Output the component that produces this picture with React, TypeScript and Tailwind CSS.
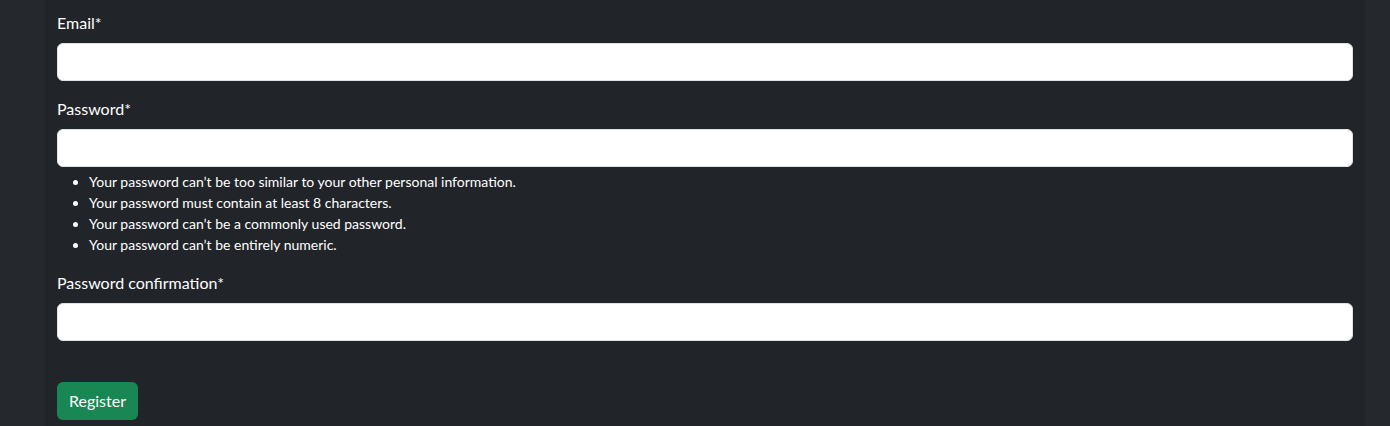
export default function App() {
  const hints = [
    "Your password can’t be too similar to your other personal information.",
    "Your password must contain at least 8 characters.",
    "Your password can’t be a commonly used password.",
    "Your password can’t be entirely numeric.",
  ];

  return (
    <div
      className="w-[1390px] h-[426px] overflow-hidden bg-[#25282c] text-white"
      style={{ fontFamily: 'Lato, "Noto Sans", sans-serif' }}
    >
      <div className="ml-[45px] w-[1320px] h-full bg-[#212529] px-3 pt-[11px]">
        <form className="flex flex-col">
          <label className="text-base leading-6 mb-2">Email*</label>
          <input
            type="email"
            className="h-[38px] w-full rounded-md border border-[#dee2e6] bg-white mb-4"
          />

          <label className="text-base leading-6 mb-2">Password*</label>
          <input
            type="password"
            className="h-[38px] w-full rounded-md border border-[#dee2e6] bg-white"
          />
          <ul className="mt-1 mb-4 pl-8 list-disc text-sm leading-[21px]">
            {hints.map((h) => (
              <li key={h}>{h}</li>
            ))}
          </ul>

          <label className="text-base leading-6 mb-2">Password confirmation*</label>
          <input
            type="password"
            className="h-[38px] w-full rounded-md border border-[#dee2e6] bg-white mb-[41px]"
          />

          <div>
            <button
              type="button"
              className="h-[38px] px-3 rounded-md bg-[#198754] text-white text-base"
            >
              Register
            </button>
          </div>
        </form>
      </div>
    </div>
  );
}
